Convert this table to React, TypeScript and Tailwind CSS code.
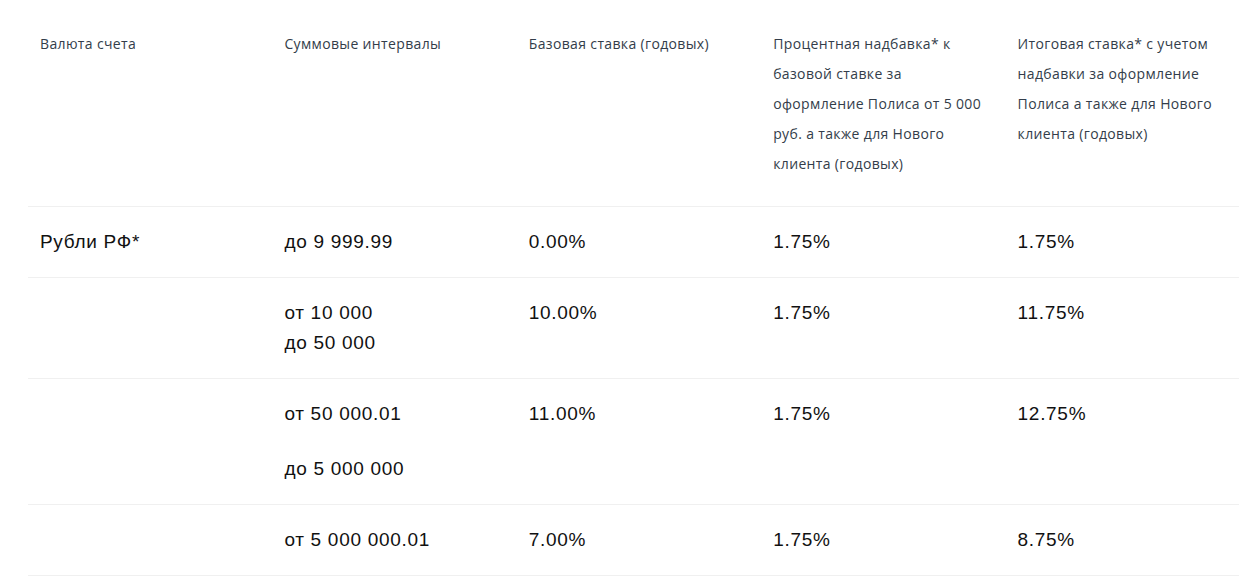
const headers = [
  'Валюта счета',
  'Суммовые интервалы',
  'Базовая ставка (годовых)',
  'Процентная надбавка* к базовой ставке за оформление Полиса от 5 000 руб. а также для Нового клиента (годовых)',
  'Итоговая ставка* с учетом надбавки за оформление Полиса а также для Нового клиента (годовых)',
];

type Row = {
  currency: string;
  range: string[];
  spaced?: boolean;
  base: string;
  bonus: string;
  total: string;
};

const rows: Row[] = [
  { currency: 'Рубли РФ*', range: ['до 9 999.99'], base: '0.00%', bonus: '1.75%', total: '1.75%' },
  { currency: '', range: ['от 10 000', 'до 50 000'], base: '10.00%', bonus: '1.75%', total: '11.75%' },
  { currency: '', range: ['от 50 000.01', 'до 5 000 000'], spaced: true, base: '11.00%', bonus: '1.75%', total: '12.75%' },
  { currency: '', range: ['от 5 000 000.01'], base: '7.00%', bonus: '1.75%', total: '8.75%' },
];

export default function App() {
  return (
    <div className="w-full min-h-[577px] overflow-hidden bg-white">
      <div className="ml-[28px] w-[1222px]">
        {/* шапка таблицы */}
        <div className="grid grid-cols-5 border-b border-[#f0f0f0] pt-[29px] pb-[27px]">
          {headers.map((h) => (
            <div
              key={h}
              className="pl-3 pr-[14px] text-[14px] leading-[30px] tracking-[0.35px] text-[#333d4a] font-['Open_Sans',sans-serif]"
            >
              {h}
            </div>
          ))}
        </div>

        {rows.map((r, i) => (
          <div
            key={i}
            className="grid grid-cols-5 border-b border-[#f0f0f0] py-5 text-[19px] leading-[30px] tracking-[0.7px] text-[#111] font-['Liberation_Sans',sans-serif]"
          >
            <div className="px-3">{r.currency}</div>
            <div className="px-3 font-medium">
              {r.range.map((line, j) => (
                <div key={j} className={r.spaced && j > 0 ? 'mt-[25px]' : ''}>
                  {line}
                </div>
              ))}
            </div>
            <div className="px-3">{r.base}</div>
            <div className="px-3">{r.bonus}</div>
            <div className="px-3">{r.total}</div>
          </div>
        ))}
      </div>
    </div>
  );
}
